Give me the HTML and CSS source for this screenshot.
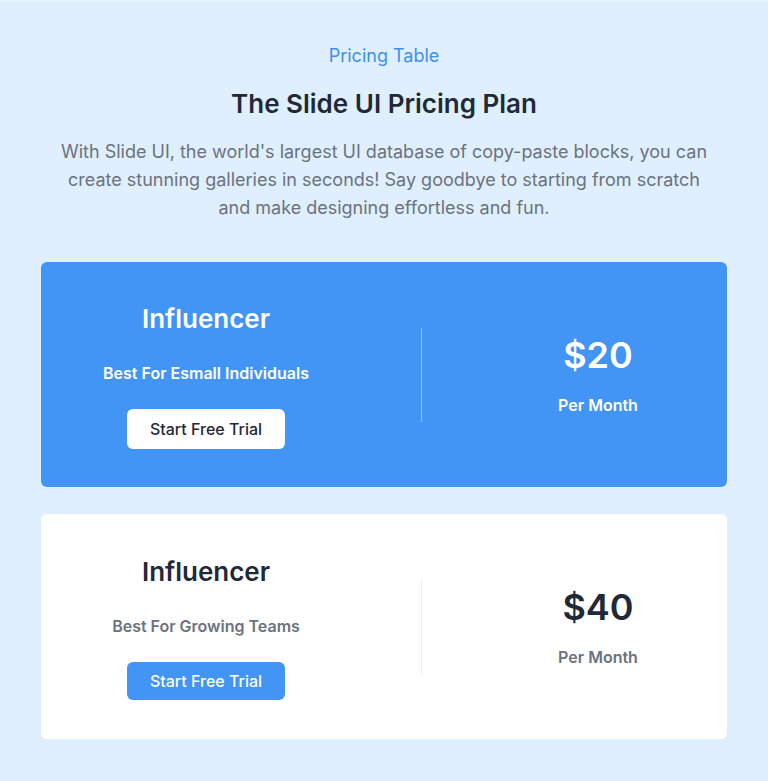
FILE: index.html
```html
<!DOCTYPE html>
<html lang="en">
<head>
<meta charset="utf-8">
<title>Pricing Table</title>
<link rel="stylesheet" href="styles.css">
</head>
<body>
<section class="pricing">
  <header class="intro">
    <p class="eyebrow">Pricing Table</p>
    <h1 class="title">The Slide UI Pricing Plan</h1>
    <p class="lead">With Slide UI, the world's largest UI database of copy-paste blocks, you can create stunning galleries in seconds! Say goodbye to starting from scratch and make designing effortless and fun.</p>
  </header>
  <div class="plans">
    <article class="plan plan--featured">
      <div class="plan-info">
        <h2 class="plan-name">Influencer</h2>
        <p class="plan-desc">Best For Esmall Individuals</p>
        <a class="plan-btn" href="#">Start Free Trial</a>
      </div>
      <div class="plan-divider"></div>
      <div class="plan-price">
        <p class="price">$20</p>
        <p class="period">Per Month</p>
      </div>
    </article>
    <article class="plan">
      <div class="plan-info">
        <h2 class="plan-name">Influencer</h2>
        <p class="plan-desc">Best For Growing Teams</p>
        <a class="plan-btn" href="#">Start Free Trial</a>
      </div>
      <div class="plan-divider"></div>
      <div class="plan-price">
        <p class="price">$40</p>
        <p class="period">Per Month</p>
      </div>
    </article>
  </div>
</section>
</body>
</html>
```

FILE: styles.css
```css
* { box-sizing: border-box; }
html, body { margin: 0; padding: 0; }
body {
  background: #e0effd;
  font-family: Inter, "Noto Sans", sans-serif;
  color: #1f2937;
}
.pricing {
  min-height: 781px;
  padding: 42px 41px 40px;
  border-top: 1px solid #eaf4fe;
}
.intro { text-align: center; }
.eyebrow {
  margin: 0;
  font-size: 18px;
  line-height: 26px;
  color: #3d8ff0;
}
.title {
  margin: 18px 0 0;
  font-size: 26px;
  line-height: 34px;
  font-weight: 600;
  letter-spacing: 0;
  color: #1f2937;
}
.lead {
  margin: 17px auto 0;
  max-width: 660px;
  font-size: 18px;
  line-height: 28px;
  color: #6b7280;
}
.plans {
  margin-top: 40px;
  display: flex;
  flex-direction: column;
  gap: 27px;
}
.plan {
  display: grid;
  grid-template-columns: 330px auto 1fr;
  align-items: center;
  min-height: 225px;
  padding: 39px 0 38px;
  background: #ffffff;
  border-radius: 6px;
  text-align: center;
}
.plan-info { display: flex; flex-direction: column; align-items: center; }
.plan-name {
  margin: 0;
  font-size: 26px;
  line-height: 34px;
  font-weight: 600;
  color: #1f2937;
}
.plan-desc {
  margin: 25px 0 0;
  font-size: 16px;
  line-height: 24px;
  font-weight: 600;
  color: #6b7280;
}
.plan-btn {
  margin-top: 24px;
  display: inline-block;
  padding: 8px 23px;
  font-size: 16px;
  line-height: 22px;
  font-weight: 500;
  text-decoration: none;
  border-radius: 6px;
  background: #4294f5;
  color: #ffffff;
}
.plan-divider {
  width: 1px;
  height: 94px;
  margin-left: 50px;
  background: #eceef1;
}
.plan-price {
  margin-left: 47px;
}
.price {
  margin: 0;
  font-size: 36px;
  line-height: 44px;
  font-weight: 600;
  color: #1f2937;
}
.period {
  margin: 16px 0 0;
  font-size: 16px;
  line-height: 24px;
  font-weight: 600;
  color: #6b7280;
}
.plan--featured { background: #4294f5; }
.plan--featured .plan-name,
.plan--featured .plan-desc,
.plan--featured .price,
.plan--featured .period { color: #ffffff; }
.plan--featured .plan-divider { background: rgba(255, 255, 255, 0.45); }
.plan--featured .plan-btn {
  background: #ffffff;
  color: #1f2937;
  padding: 9px 23px;
}
```
